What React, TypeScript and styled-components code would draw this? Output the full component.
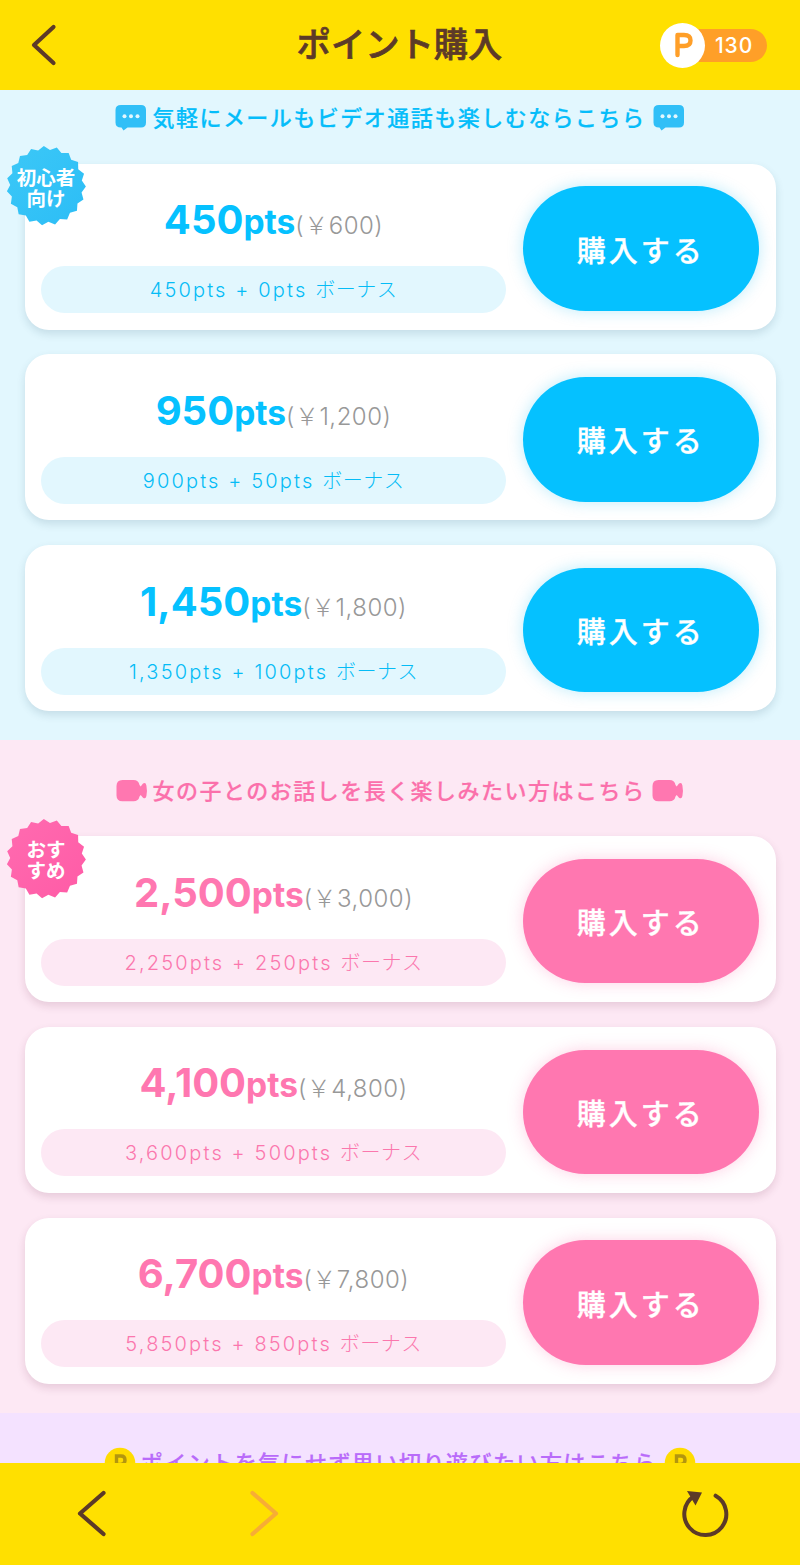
import React from "react";
import styled, { createGlobalStyle } from "styled-components";

const Global = createGlobalStyle`
  * { box-sizing: border-box; }
  html, body { margin: 0; padding: 0; background: #ffe000; }
  body { font-family: Inter, "Noto Sans CJK JP", sans-serif; }
`;

const BROWN = "#5c3a28";

type Tone = { main: string; tint: string; text: string; badge: [string, string]; glow: string; shadow: string };

const BLUE: Tone = { main: "#05c1ff", tint: "#e2f7fe", text: "#05bcf6", badge: ["#3cc8f7", "#2cbdf6"], glow: "rgba(0, 180, 240, 0.26)", shadow: "rgba(20, 70, 90, 0.14)" };
const PINK: Tone = { main: "#ff77b0", tint: "#fde8f4", text: "#fb77ad", badge: ["#ff6bb0", "#ff5ba6"], glow: "rgba(250, 90, 160, 0.28)", shadow: "rgba(90, 20, 60, 0.14)" };

const Screen = styled.div`
  width: 800px;
  height: 1565px;
  display: flex;
  flex-direction: column;
  overflow: hidden;
`;

const Header = styled.header`
  height: 90px;
  flex: none;
  display: grid;
  grid-template-columns: 162px 1fr 160px;
  align-items: center;
  background: #ffe000;
  padding: 0 33px 0 30px;
`;

const Title = styled.h1`
  margin: 0;
  text-align: center;
  font-size: 34.3px;
  line-height: 50px;
  font-weight: 500;
  -webkit-text-stroke: 0.7px ${BROWN};
  color: ${BROWN};
  white-space: nowrap;
`;

const IconButton = styled.button`
  display: flex;
  padding: 0;
  border: 0;
  background: none;
`;

const Balance = styled.div`
  justify-self: end;
  display: flex;
  align-items: center;
`;

const Coin = styled.span`
  width: 45px;
  height: 45px;
  border-radius: 50%;
  background: #fff;
  display: flex;
  align-items: center;
  justify-content: center;
  z-index: 1;
`;

const BalanceValue = styled.span`
  height: 33px;
  width: 85px;
  margin-left: -23px;
  padding-left: 33px;
  border-radius: 17px;
  background: #ff9f28;
  color: #fff;
  font-size: 21px;
  line-height: 33px;
  font-weight: 500;
  letter-spacing: 0.9px;
`;

const Main = styled.main`
  flex: 1;
  min-height: 0;
  overflow: hidden;
`;

const Section = styled.section<{ $bg: string; $height: number; $top: number }>`
  height: ${(p) => p.$height}px;
  padding: ${(p) => p.$top}px 24.5px 0;
  background: ${(p) => p.$bg};
`;

const Heading = styled.h2<{ $color: string }>`
  margin: 0 0 29.5px;
  height: 32px;
  display: flex;
  justify-content: center;
  align-items: center;
  gap: 5px;
  font-size: 22px;
  line-height: 32px;
  font-weight: 500;
  letter-spacing: 1.48px;
  color: ${(p) => p.$color};
  -webkit-text-stroke: 0.2px ${(p) => p.$color};
  white-space: nowrap;
  svg { flex: none; }
  svg:last-child { margin-left: 2px; }
`;

const Cards = styled.div`
  display: flex;
  flex-direction: column;
  gap: 24.8px;
`;

const Card = styled.article<{ $tone: Tone }>`
  position: relative;
  height: 166px;
  display: grid;
  grid-template-columns: 465px 236.5px;
  justify-content: space-between;
  align-items: center;
  padding: 4px 16.5px 0;
  border-radius: 24px;
  background: #fff;
  box-shadow: 0 4px 8px ${(p) => p.$tone.shadow};
`;

const Info = styled.div`
  display: flex;
  flex-direction: column;
  align-items: center;
  height: 135px;
`;

const Amount = styled.div`
  height: 85px;
  display: flex;
  align-items: baseline;
  line-height: 77px;
  white-space: nowrap;
`;

const Points = styled.span<{ $color: string }>`
  font-size: 40px;
  font-weight: 700;
  color: ${(p) => p.$color};
`;

const Unit = styled.span<{ $color: string }>`
  font-size: 33.5px;
  font-weight: 700;
  color: ${(p) => p.$color};
`;

const Price = styled.span`
  font-size: 24px;
  font-weight: 300;
  letter-spacing: 0.5px;
  color: #989898;
`;

const Bonus = styled.div<{ $tone: Tone }>`
  width: 100%;
  height: 47px;
  border-radius: 23.5px;
  background: ${(p) => p.$tone.tint};
  color: ${(p) => p.$tone.text};
  font-size: 20px;
  line-height: 49px;
  letter-spacing: 2.15px;
  text-align: center;
  white-space: pre;
  font-weight: 350;
`;

const BonusLabel = styled.span`
  font-weight: 300;
  letter-spacing: 0.5px;
`;

const Buy = styled.button<{ $tone: Tone }>`
  height: 124.5px;
  border: 0;
  padding: 0;
  border-radius: 63px;
  background: ${(p) => p.$tone.main};
  box-shadow: 0 0 16px ${(p) => p.$tone.glow};
  color: #fff;
  font: 500 29px/40px "Noto Sans CJK JP", sans-serif;
  -webkit-text-stroke: 0.3px #fff;
  letter-spacing: 3px;
`;

const Badge = styled.div`
  position: absolute;
  left: -19px;
  top: -18.5px;
  width: 81px;
  height: 81px;
  display: flex;
  align-items: center;
  justify-content: center;
  color: #fff;
  text-align: center;
  font: 700 19.5px/21px "Noto Sans CJK JP", sans-serif;
  white-space: pre;
`;

const BadgeShape = styled.svg`
  position: absolute;
  inset: 0;
`;

const BadgeText = styled.span`
  position: relative;
  padding-top: 2px;
`;

const Footer = styled.footer`
  height: 102.5px;
  flex: none;
  background: #ffe000;
  display: flex;
  align-items: center;
  padding: 0 71px 0 76px;
`;

const Forward = styled(IconButton)`
  margin-left: 142px;
  margin-right: auto;
`;

const Chevron = ({ w, h, dir, color }: { w: number; h: number; dir: "left" | "right"; color: string }) => (
  <svg width={w} height={h} fill="none" stroke={color} strokeWidth="4.2" strokeLinecap="round" strokeLinejoin="round">
    <path d={dir === "left" ? `M${w - 3.5} 3L4 ${h / 2}L${w - 3.5} ${h - 3}` : `M3.5 3L${w - 4} ${h / 2}L3.5 ${h - 3}`} />
  </svg>
);

const Bubble = () => (
  <svg width="32" height="28" viewBox="0 0 32 28">
    <path d="M6 1H26Q31 1 31 6V18.500Q31 23.500 26 23.500H12.500L8.500 26.500L6.500 23.500H6Q0.500 23.500 0.500 18.500V6Q0.500 1 6 1Z" fill="#30bff7" />
    <circle cx="9.500" cy="12.300" r="2" fill="#e2f7fe" />
    <circle cx="16" cy="12.300" r="2" fill="#e2f7fe" />
    <circle cx="22.500" cy="12.300" r="2" fill="#e2f7fe" />
  </svg>
);

const Camera = () => (
  <svg width="32" height="24" viewBox="0 0 32 24" fill="#ff77b0">
    <path d="M6.500 1H17.500Q22.500 1 23.500 6L24.700 7.500L27 4.600Q29.700 3 30.400 6.500Q31.500 12 30.400 17Q29.700 20.500 27 18.700L24.700 16L23.500 17.500Q22.500 22.300 17.500 22.300H6.500Q0.500 22.300 0.500 16.500V7Q0.500 1 6.500 1Z" />
  </svg>
);

const PointIcon = () => (
  <svg width="32" height="32" viewBox="0 0 32 32">
    <circle cx="16" cy="16" r="15.300" fill="#ffdc00" />
    <path d="M12.500 25V9H17Q21 9 21 13T17 17.500H12.500" fill="none" stroke="#b3960f" strokeWidth="3.400" />
  </svg>
);

const Reload = () => (
  <svg width="48" height="48" viewBox="0 0 48 48">
    <path d="M34.600 5.700A21 21 0 1 1 13 6.300" fill="none" stroke={BROWN} strokeWidth="4" strokeLinecap="round" />
    <path d="M6 1L21 2.500L14.500 15.500Z" fill={BROWN} />
  </svg>
);

const TEETH = 19;
const burst = Array.from({ length: TEETH * 2 }, (_, i) => {
  const r = i % 2 === 0 ? 39.7 : 36;
  const a = (Math.PI * i) / TEETH - Math.PI / 2 - 0.06;
  return `${(40.2 + r * Math.cos(a)).toFixed(2)},${(40.7 + r * Math.sin(a)).toFixed(2)}`;
}).join(" ");

const Seal = ({ id, colors, label }: { id: string; colors: [string, string]; label: string }) => (
  <Badge>
    <BadgeShape width="81" height="81">
      <defs>
        <linearGradient id={id} x1="0" y1="0" x2="1" y2="1">
          <stop offset="0" stopColor={colors[0]} />
          <stop offset="1" stopColor={colors[1]} />
        </linearGradient>
      </defs>
      <polygon points={burst} fill={`url(#${id})`} />
    </BadgeShape>
    <BadgeText>{label}</BadgeText>
  </Badge>
);

type Plan = { points: string; price: string; bonus: string };

const starter: Plan[] = [
  { points: "450", price: "600", bonus: "450pts + 0pts" },
  { points: "950", price: "1,200", bonus: "900pts + 50pts" },
  { points: "1,450", price: "1,800", bonus: "1,350pts + 100pts" },
];
const recommended: Plan[] = [
  { points: "2,500", price: "3,000", bonus: "2,250pts + 250pts" },
  { points: "4,100", price: "4,800", bonus: "3,600pts + 500pts" },
  { points: "6,700", price: "7,800", bonus: "5,850pts + 850pts" },
];

const PlanList = ({ plans, tone, label, id }: { plans: Plan[]; tone: Tone; label: string; id: string }) => (
  <Cards>
    {plans.map((plan, i) => (
      <Card key={plan.points} $tone={tone}>
        <Info>
          <Amount>
            <Points $color={tone.main}>{plan.points}</Points>
            <Unit $color={tone.main}>pts</Unit>
            <Price>(￥{plan.price})</Price>
          </Amount>
          <Bonus $tone={tone}>{plan.bonus} <BonusLabel>ボーナス</BonusLabel></Bonus>
        </Info>
        <Buy $tone={tone}>購入する</Buy>
        {i === 0 && <Seal id={id} colors={tone.badge} label={label} />}
      </Card>
    ))}
  </Cards>
);

export default function App() {
  return (
    <Screen>
      <Global />
      <Header>
        <IconButton aria-label="戻る"><Chevron w={27} h={42} dir="left" color={BROWN} /></IconButton>
        <Title>ポイント購入</Title>
        <Balance>
          <Coin>
            <svg width="20" height="28" viewBox="0 0 20 28" fill="none" stroke="#ff9f28" strokeWidth="4.4" strokeLinecap="round" strokeLinejoin="round">
              <path d="M4.500 24V4H11Q17.500 4 17.500 9.500T11 15H4.500" />
            </svg>
          </Coin>
          <BalanceValue>130</BalanceValue>
        </Balance>
      </Header>
      <Main>
        <Section $bg="#e2f7fe" $height={650} $top={12}>
          <Heading $color="#05bdfa"><Bubble />気軽にメールもビデオ通話も楽しむならこちら<Bubble /></Heading>
          <PlanList plans={starter} tone={BLUE} label={"初心者\n向け"} id="seal-blue" />
        </Section>
        <Section $bg="#fde8f4" $height={672.5} $top={34.5}>
          <Heading $color="#fb70ab"><Camera />女の子とのお話しを長く楽しみたい方はこちら<Camera /></Heading>
          <PlanList plans={recommended} tone={PINK} label={"おす\nすめ"} id="seal-pink" />
        </Section>
        <Section $bg="#f4e2ff" $height={120} $top={34}>
          <Heading $color="#b96bfa"><PointIcon />ポイントを気にせず思い切り遊びたい方はこちら<PointIcon /></Heading>
        </Section>
      </Main>
      <Footer>
        <IconButton aria-label="前のページ"><Chevron w={31} h={47} dir="left" color={BROWN} /></IconButton>
        <Forward aria-label="次のページ"><Chevron w={31} h={47} dir="right" color="#f7ad35" /></Forward>
        <IconButton aria-label="再読み込み"><Reload /></IconButton>
      </Footer>
    </Screen>
  );
}
